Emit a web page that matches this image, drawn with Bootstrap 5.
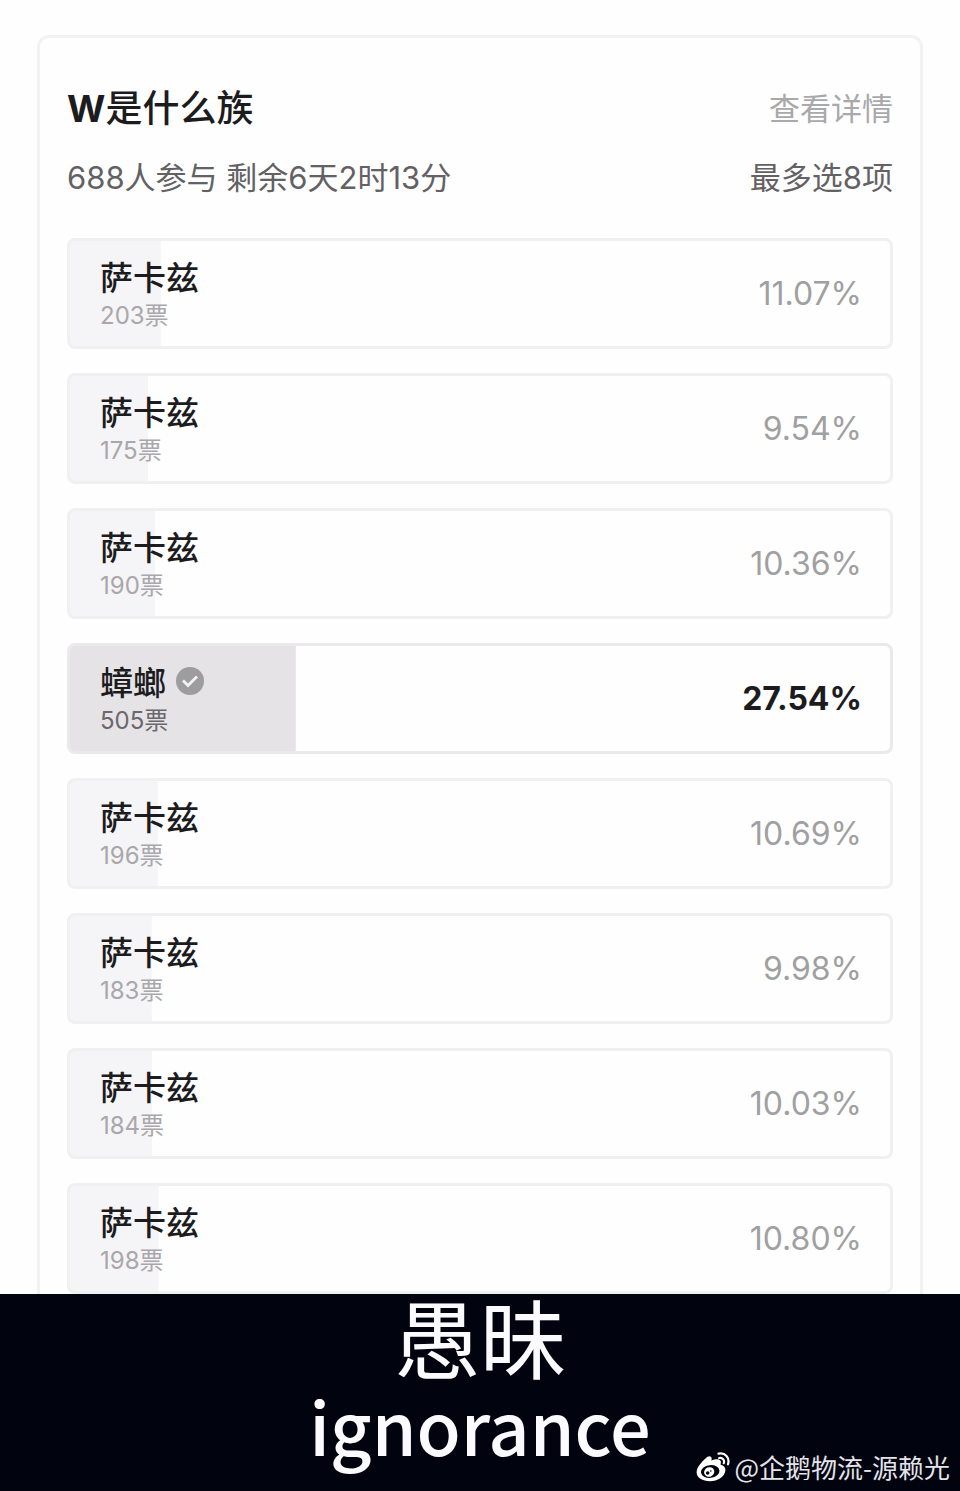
<!DOCTYPE html>
<html lang="zh-CN">
<head>
<meta charset="utf-8">
<meta name="viewport" content="width=device-width, initial-scale=1">
<title>W是什么族</title>
<link href="https://cdn.jsdelivr.net/npm/bootstrap@5.3.0/dist/css/bootstrap.min.css" rel="stylesheet">
<style>
body{font-family:Inter,"Noto Sans CJK SC",sans-serif;background:#fefefe;color:#1c1c1e}
.poll-wrap{padding:35px 37px 0}
.poll{border:3px solid #f2f2f2;border-bottom:0;border-radius:12px 12px 0 0;padding:49px 27px 0;background:#fefefe}
.poll-title{font-size:37px;line-height:44px;font-weight:700}
.poll-title span{font-weight:500}
.poll-more{font-size:31px;line-height:44px;color:#a9a8aa}
.poll-meta{font-size:31px;line-height:40px;margin-top:27px;color:#636164}
.poll-options{gap:24px;margin-top:40px}
.option{--fill:#f5f4f6;min-height:111px;padding:0 28px 0 30px;border:3px solid #f0f0f1;border-radius:8px;cursor:pointer;
 background:linear-gradient(var(--fill),var(--fill)) 0 0/var(--share) 100% no-repeat #fefefe}
.option-name{font-size:33px;line-height:40px;font-weight:500;gap:10px}
.option-votes{font-size:24px;line-height:28px;margin-top:4px;color:#a9a7ab}
.option-share{font-size:32px;line-height:40px;color:#a09fa1}
.option-tick{display:none}
.btn-check:checked + .option{--fill:#e6e3e7;border-color:#eaeaeb}
.btn-check:checked + .option .option-tick{display:block}
.btn-check:checked + .option .option-votes{color:#6a686c}
.btn-check:checked + .option .option-share{color:#1c1c1e;font-weight:700}
.caption-bar{background:#01030f;color:#fafaff;font-family:"Noto Sans CJK SC",sans-serif;padding:0 10px 19px}
.caption-zh{font-size:86px;line-height:84px}
.caption-en{font-size:72px;line-height:94px;font-weight:500}
.credit{right:10px;bottom:6px;font-size:26px;line-height:36px;color:#e4e4ea;gap:4px}
</style>
</head>
<body>
<main class="poll-wrap">
<form class="poll">
<div class="d-flex justify-content-between align-items-center">
<h1 class="poll-title m-0">W<span>是什么族</span></h1>
<a class="poll-more text-decoration-none" href="#">查看详情</a>
</div>
<div class="poll-meta d-flex justify-content-between">
<span>688人参与 剩余6天2时13分</span><span>最多选8项</span>
</div>
<div class="poll-options d-flex flex-column">
<div><input class="btn-check" type="checkbox" id="o1"><label class="option d-flex justify-content-between align-items-center" for="o1" style="--share:11.07%"><span><span class="option-name d-flex align-items-center">萨卡兹</span><span class="option-votes d-block">203票</span></span><span class="option-share">11.07%</span></label></div>
<div><input class="btn-check" type="checkbox" id="o2"><label class="option d-flex justify-content-between align-items-center" for="o2" style="--share:9.54%"><span><span class="option-name d-flex align-items-center">萨卡兹</span><span class="option-votes d-block">175票</span></span><span class="option-share">9.54%</span></label></div>
<div><input class="btn-check" type="checkbox" id="o3"><label class="option d-flex justify-content-between align-items-center" for="o3" style="--share:10.36%"><span><span class="option-name d-flex align-items-center">萨卡兹</span><span class="option-votes d-block">190票</span></span><span class="option-share">10.36%</span></label></div>
<div><input class="btn-check" type="checkbox" id="o4" checked><label class="option d-flex justify-content-between align-items-center" for="o4" style="--share:27.54%"><span><span class="option-name d-flex align-items-center">蟑螂<svg class="option-tick mb-1" width="28" height="28" viewBox="0 0 28 28" aria-hidden="true"><circle cx="14" cy="14" r="14" fill="#9d9c9e"/><path d="M7 13.500l5 5 9-9" fill="none" stroke="#f4f2f4" stroke-width="2.800"/></svg></span><span class="option-votes d-block">505票</span></span><span class="option-share">27.54%</span></label></div>
<div><input class="btn-check" type="checkbox" id="o5"><label class="option d-flex justify-content-between align-items-center" for="o5" style="--share:10.69%"><span><span class="option-name d-flex align-items-center">萨卡兹</span><span class="option-votes d-block">196票</span></span><span class="option-share">10.69%</span></label></div>
<div><input class="btn-check" type="checkbox" id="o6"><label class="option d-flex justify-content-between align-items-center" for="o6" style="--share:9.98%"><span><span class="option-name d-flex align-items-center">萨卡兹</span><span class="option-votes d-block">183票</span></span><span class="option-share">9.98%</span></label></div>
<div><input class="btn-check" type="checkbox" id="o7"><label class="option d-flex justify-content-between align-items-center" for="o7" style="--share:10.03%"><span><span class="option-name d-flex align-items-center">萨卡兹</span><span class="option-votes d-block">184票</span></span><span class="option-share">10.03%</span></label></div>
<div><input class="btn-check" type="checkbox" id="o8"><label class="option d-flex justify-content-between align-items-center" for="o8" style="--share:10.80%"><span><span class="option-name d-flex align-items-center">萨卡兹</span><span class="option-votes d-block">198票</span></span><span class="option-share">10.80%</span></label></div>
</div>
</form>
</main>
<footer class="caption-bar position-relative text-center">
<p class="caption-zh m-0">愚昧</p>
<p class="caption-en m-0" lang="en">ignorance</p>
<div class="credit position-absolute d-flex align-items-center">
<svg width="34" height="30" viewBox="0 0 34 30" aria-hidden="true"><path fill="#fff" d="M13.500 4.200c2 .1 2.700 2 1.900 4.300 3.600-1.500 7.400-1.800 8.900 0 .9 1 .7 2.600.2 4 3.300 1 5.200 3 4.900 6C28.700 25 21.500 29.200 14 29.200 6.500 29.200.6 25.700.6 20.200c0-3 1.700-6.300 4.700-9.500 2.800-3 5.800-6.600 8.200-6.500z"/><ellipse cx="14.200" cy="19.500" rx="9.300" ry="6.400" fill="#01030f" transform="rotate(-6 14.200 19.500)"/><ellipse cx="13.200" cy="20" rx="5.200" ry="4.700" fill="#fff" transform="rotate(-20 13.200 20)"/><circle cx="11.700" cy="21" r="1.800" fill="#01030f"/><circle cx="14.800" cy="19" r=".8" fill="#01030f"/><path d="M23.200 6c3.400-.6 5.600 2 4.600 5.300M22.500 1.700c6.700-1.400 11.500 4 9.500 10.600" fill="none" stroke="#fff" stroke-width="2.200" stroke-linecap="round"/></svg>
<span>@企鹅物流-源赖光</span>
</div>
</footer>
<script src="https://cdn.jsdelivr.net/npm/bootstrap@5.3.0/dist/js/bootstrap.bundle.min.js"></script>
</body>
</html>
